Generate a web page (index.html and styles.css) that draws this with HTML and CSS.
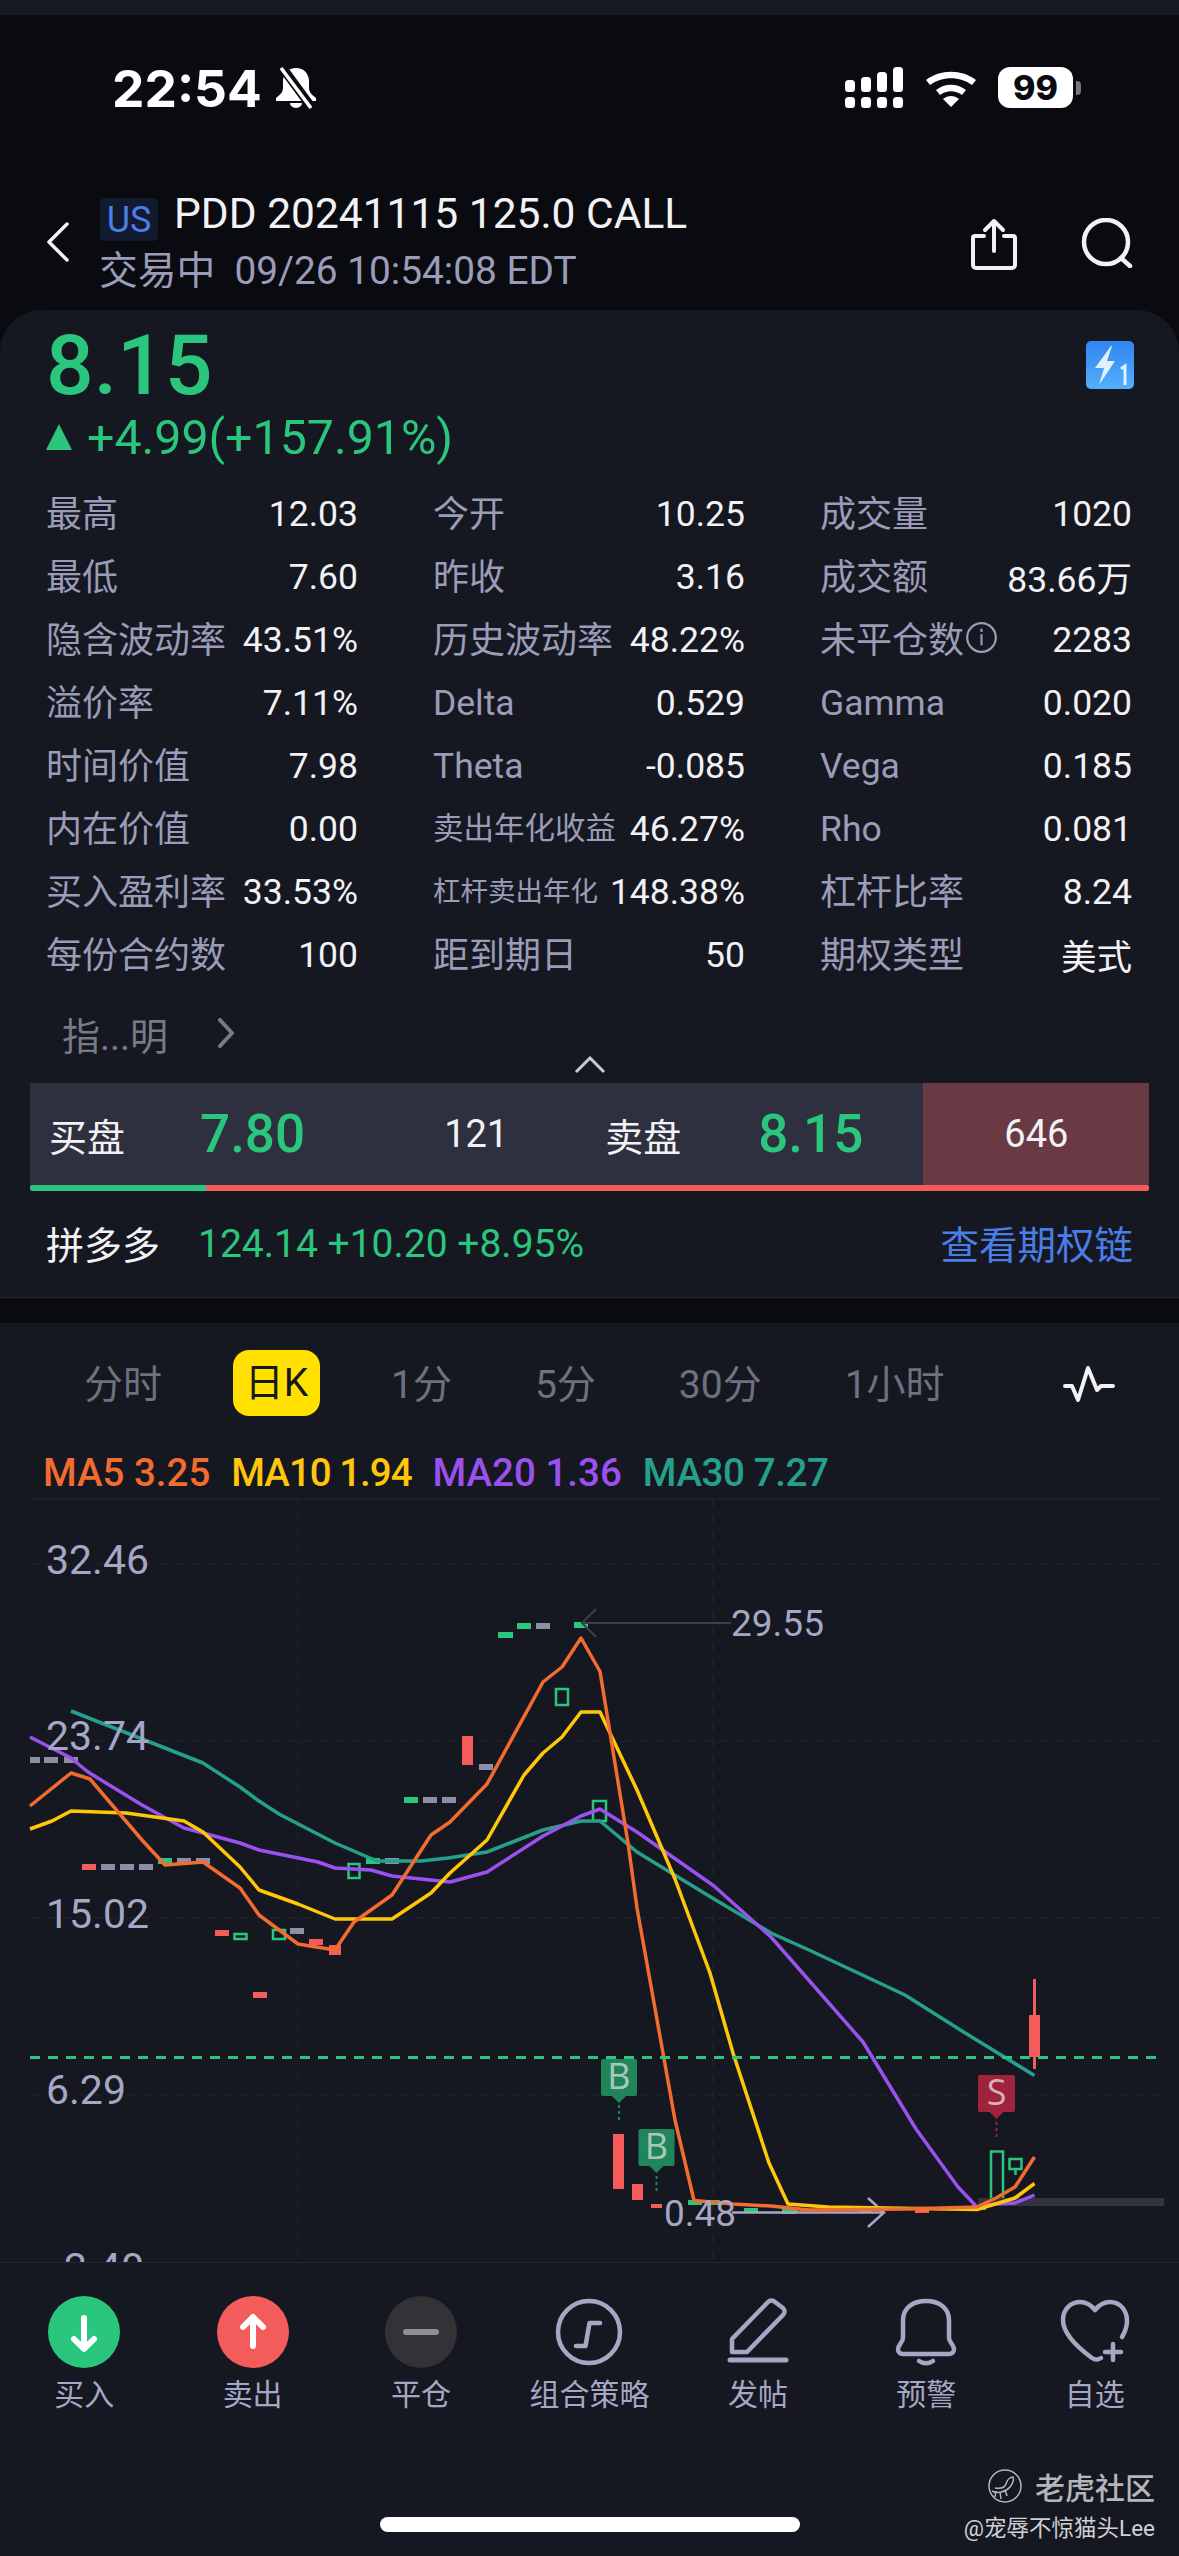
FILE: index.html
```html
<!DOCTYPE html>
<html lang="zh">
<head>
<meta charset="UTF-8">
<title>PDD 20241115 125.0 CALL</title>
<link rel="stylesheet" href="styles.css">
</head>
<body>
<div class="app">
  <div class="top-strip"></div>

  <div class="status-bar">
    <div class="status-left">
      <span class="clock">22:54</span>
      <svg class="bell-off" viewBox="0 0 42 42">
        <path d="M21 1C13 1 9 6 8 13v8c0 4-3 7-7 10v3h40v-3c-4-3-7-6-7-10v-8C33 6 29 1 21 1z" fill="#fff"/>
        <path d="M15 36a6 5 0 0 0 12 0z" fill="#fff"/>
        <path d="M7 0l30 41" stroke="#0a0b10" stroke-width="9"/>
        <path d="M6 1l30 40" stroke="#fff" stroke-width="3.5"/>
      </svg>
    </div>
    <div class="status-right">
      <svg class="signal" viewBox="0 0 58 41" fill="#fff">
        <rect x="0" y="13" width="10" height="12" rx="3.5"/><rect x="0" y="30" width="10" height="11" rx="3.5"/>
        <rect x="16" y="10" width="10" height="15" rx="3.5"/><rect x="16" y="30" width="10" height="11" rx="3.5"/>
        <rect x="32" y="5" width="10" height="20" rx="3.5"/><rect x="32" y="30" width="10" height="11" rx="3.5"/>
        <rect x="48" y="0" width="10" height="25" rx="3.5"/><rect x="48" y="30" width="10" height="11" rx="3.5"/>
      </svg>
      <svg class="wifi" viewBox="0 0 50 40" fill="#fff">
        <path d="M0 12C14 1 36 1 50 12l-4 5C34 8 16 8 4 17z"/>
        <path d="M10 22c9-7 21-7 30 0l-4 5c-7-5-15-5-22 0z"/>
        <path d="M25 39l-8-8c5-4 11-4 16 0z"/>
      </svg>
      <div class="battery">99</div>
      <div class="battery-nub"></div>
    </div>
  </div>

  <div class="nav-bar">
    <svg class="back" viewBox="0 0 24 40" fill="none" stroke="#f2f2f5" stroke-width="3.5" stroke-linecap="round" stroke-linejoin="round">
      <path d="M21 2L3 20l18 18"/>
    </svg>
    <div class="nav-title">
      <div class="title-line"><span class="market">US</span><span class="symbol">PDD 20241115 125.0 CALL</span></div>
      <div class="sub-line"><span>交易中</span><span>09/26 10:54:08 EDT</span></div>
    </div>
    <svg class="share" viewBox="0 0 48 52" fill="none" stroke="#f2f2f5" stroke-width="4" stroke-linecap="round" stroke-linejoin="round">
      <path d="M14 18H5a2 2 0 0 0-2 2v27a3 3 0 0 0 3 3h36a3 3 0 0 0 3-3V20a2 2 0 0 0-2-2h-9"/>
      <path d="M24 33V3M15 12l9-9 9 9"/>
    </svg>
    <svg class="search" viewBox="0 0 52 50" fill="none" stroke="#f2f2f5" stroke-width="4.5" stroke-linecap="round">
      <circle cx="25" cy="24" r="22"/>
      <path d="M40 40l9 8"/>
    </svg>
  </div>

  <div class="quote-panel">
    <div class="price-row">
      <span class="price">8.15</span>
      <svg class="flash" viewBox="0 0 48 48">
        <defs><linearGradient id="flashFill" x1="0" y1="0" x2="0" y2="1"><stop offset="0" stop-color="#2f86f0"/><stop offset="1" stop-color="#55aefc"/></linearGradient></defs>
        <rect width="48" height="48" rx="5" fill="url(#flashFill)"/>
        <path d="M25 5L9 27h9l-5 17 16-24h-8l5-15z" fill="#dff0ff"/>
        <path d="M35 28l4-3v19" fill="none" stroke="#dff0ff" stroke-width="3"/>
      </svg>
    </div>
    <div class="change-row"><i class="up-arrow"></i><span>+4.99(+157.91%)</span></div>

    <div class="stats">
      <div class="stat"><span class="k">最高</span><span class="v">12.03</span></div>
      <div class="stat"><span class="k">今开</span><span class="v">10.25</span></div>
      <div class="stat"><span class="k">成交量</span><span class="v">1020</span></div>
      <div class="stat"><span class="k">最低</span><span class="v">7.60</span></div>
      <div class="stat"><span class="k">昨收</span><span class="v">3.16</span></div>
      <div class="stat"><span class="k">成交额</span><span class="v">83.66万</span></div>
      <div class="stat"><span class="k">隐含波动率</span><span class="v">43.51%</span></div>
      <div class="stat"><span class="k">历史波动率</span><span class="v">48.22%</span></div>
      <div class="stat"><span class="k">未平仓数<svg class="info" viewBox="0 0 30 30" fill="none" stroke="#9a9cb8" stroke-width="2"><circle cx="15" cy="15" r="13"/><path d="M15 12v10M15 7v3"/></svg></span><span class="v">2283</span></div>
      <div class="stat"><span class="k">溢价率</span><span class="v">7.11%</span></div>
      <div class="stat"><span class="k en">Delta</span><span class="v">0.529</span></div>
      <div class="stat"><span class="k en">Gamma</span><span class="v">0.020</span></div>
      <div class="stat"><span class="k">时间价值</span><span class="v">7.98</span></div>
      <div class="stat"><span class="k en">Theta</span><span class="v">-0.085</span></div>
      <div class="stat"><span class="k en">Vega</span><span class="v">0.185</span></div>
      <div class="stat"><span class="k">内在价值</span><span class="v">0.00</span></div>
      <div class="stat"><span class="k small">卖出年化收益</span><span class="v">46.27%</span></div>
      <div class="stat"><span class="k en">Rho</span><span class="v">0.081</span></div>
      <div class="stat"><span class="k">买入盈利率</span><span class="v">33.53%</span></div>
      <div class="stat"><span class="k smaller">杠杆卖出年化</span><span class="v">148.38%</span></div>
      <div class="stat"><span class="k">杠杆比率</span><span class="v">8.24</span></div>
      <div class="stat"><span class="k">每份合约数</span><span class="v">100</span></div>
      <div class="stat"><span class="k">距到期日</span><span class="v">50</span></div>
      <div class="stat"><span class="k">期权类型</span><span class="v">美式</span></div>
    </div>

    <div class="guide-row">
      <span>指...明</span>
      <svg viewBox="0 0 18 30" fill="none" stroke="#777a88" stroke-width="4" stroke-linecap="round" stroke-linejoin="round"><path d="M3 2l12 13L3 28"/></svg>
    </div>
    <div class="collapse-row">
      <svg viewBox="0 0 32 18" fill="none" stroke="#c8c9d2" stroke-width="3"><path d="M2 16L16 2l14 14"/></svg>
    </div>

    <div class="book">
      <div class="book-cells">
        <span class="book-label bid-label">买盘</span>
        <span class="book-price bid-price">7.80</span>
        <span class="book-size bid-size">121</span>
        <span class="book-label ask-label">卖盘</span>
        <span class="book-price ask-price">8.15</span>
        <span class="book-depth">646</span>
      </div>
      <div class="book-ratio"><i class="ratio-bid"></i><i class="ratio-ask"></i></div>
    </div>

    <div class="underlying">
      <span class="u-name">拼多多</span>
      <span class="u-quote">124.14 +10.20 +8.95%</span>
      <span class="u-link">查看期权链</span>
    </div>
  </div>

  <div class="chart-panel">
    <div class="tabs">
      <span class="tab">分时</span>
      <span class="tab tab-active">日K</span>
      <span class="tab">1分</span>
      <span class="tab">5分</span>
      <span class="tab">30分</span>
      <span class="tab">1小时</span>
      <svg class="tab-icon" viewBox="0 0 52 36" fill="none" stroke="#f2f2f5" stroke-width="4" stroke-linejoin="round" stroke-linecap="round">
        <path d="M2 20h7l6 14 10-32 9 22 4-4h12"/>
      </svg>
    </div>

    <div class="legend">
      <span class="ma5">MA5 3.25</span>
      <span class="ma10">MA10 1.94</span>
      <span class="ma20">MA20 1.36</span>
      <span class="ma30">MA30 7.27</span>
    </div>

    <svg class="chart" viewBox="0 1493 1179 769" width="1179" height="769">
      <!-- grid -->
      <g stroke="#20222b" stroke-width="1.5" fill="none">
        <path d="M30 1499H1160"/>
        <path stroke-dasharray="8 8" d="M30 1564H1160M30 1741H1160M30 1918H1160M30 2095H1160"/>
        <path stroke-dasharray="8 8" d="M298 1499V2262M713 1499V2262"/>
      </g>

      <!-- candles -->
      <g fill="#8d8fa6">
        <rect x="30" y="1757" width="10" height="6"/><rect x="44" y="1757" width="14" height="6"/><rect x="64" y="1757" width="14" height="6"/>
        <rect x="101" y="1864" width="14" height="6"/><rect x="120" y="1864" width="14" height="6"/><rect x="139" y="1864" width="14" height="6"/>
        <rect x="177" y="1858" width="14" height="6"/><rect x="196" y="1858" width="14" height="6"/>
        <rect x="290" y="1928" width="14" height="6"/>
        <rect x="385" y="1858" width="14" height="6"/>
        <rect x="423" y="1797" width="14" height="6"/><rect x="442" y="1797" width="14" height="6"/>
        <rect x="479" y="1764" width="14" height="6"/>
        <rect x="536" y="1623" width="14" height="6"/>
      </g>
      <g fill="#f45b5b">
        <rect x="82" y="1864" width="14" height="6"/>
        <rect x="215" y="1930" width="14" height="6"/>
        <rect x="253" y="1992" width="14" height="6"/>
        <rect x="309" y="1939" width="14" height="6"/>
        <rect x="329" y="1945" width="12" height="10"/>
        <rect x="462" y="1736" width="11" height="29"/>
        <rect x="613" y="2134" width="11" height="55"/>
        <rect x="632" y="2184" width="11" height="16"/>
        <rect x="651" y="2204" width="11" height="4"/>
        <rect x="1029" y="2015" width="11" height="42"/>
        <rect x="1033" y="1979" width="3" height="90"/>
        <rect x="784" y="2210" width="14" height="3"/>
        <rect x="915" y="2210" width="14" height="3"/>
      </g>
      <g fill="#2bc67e">
        <rect x="158" y="1858" width="14" height="6"/>
        <rect x="366" y="1858" width="14" height="6"/>
        <rect x="404" y="1797" width="14" height="6"/>
        <rect x="498" y="1632" width="15" height="6"/>
        <rect x="517" y="1623" width="14" height="6"/>
        <rect x="574" y="1622" width="14" height="6"/>
        <rect x="688" y="2200" width="14" height="5"/>
        <rect x="706" y="2200" width="14" height="5"/>
        <rect x="744" y="2208" width="14" height="5"/>
        <rect x="782" y="2209" width="14" height="5"/>
        <rect x="858" y="2209" width="14" height="4"/>
        <rect x="972" y="2205" width="14" height="5"/>
      </g>
      <g fill="none" stroke="#2bc67e" stroke-width="2.5">
        <rect x="234.5" y="1934" width="12" height="5"/>
        <rect x="273" y="1930" width="12" height="9"/>
        <rect x="348.5" y="1864" width="11" height="14"/>
        <rect x="556" y="1689" width="12" height="16"/>
        <rect x="593" y="1801" width="13" height="20"/>
        <rect x="991" y="2151.5" width="12" height="48"/>
        <rect x="1009.5" y="2159" width="12" height="10"/>
        <path d="M1015.5 2169v6"/>
      </g>

      <rect x="978" y="2198" width="186" height="8" fill="#33343f"/>

      <!-- high / low markers -->
      <path d="M582 1623H731M596 1609l-14 14 14 14" fill="none" stroke="#3d3e49" stroke-width="2"/>
      <path d="M732 2212.5H884M868 2198l16 14.500-16 14.500" fill="none" stroke="#a5a7c4" stroke-width="2.500"/>

      <!-- moving averages -->
      <g fill="none" stroke-width="3.500" stroke-linejoin="round">
        <polyline stroke="#25a08c" points="71,1711 203,1763 240,1787 259,1801 279,1814 335,1843 377,1861 421,1861 448,1858 487,1852 543,1830 581,1821 600,1821 637,1852 714,1899 771,1933 809,1950 905,1995 962,2031 1034.500,2075.500"/>
        <polyline stroke="#9b51f0" points="30,1737 71,1758 88,1772 142,1805 184,1828 203,1833 240,1843 259,1850 318,1862 335,1868 371,1870 392,1876 450,1882 487,1872 543,1836 581,1816 600,1809 637,1832 714,1886 771,1937 863,2042 916,2129 958,2187 977,2207 996,2204 1015,2203 1034.500,2195"/>
        <polyline stroke="#ffc60a" points="30,1829 52,1821 71,1811 126,1813 184,1821 203,1832 240,1867 259,1890 298,1904 335,1919 392,1919 431,1893 450,1873 487,1840 524,1775 543,1753 562,1737 581,1712 600,1712 637,1790 675,1879 710,1973 733,2053 769,2163 788,2204 828,2207 977,2209.500 1015,2198 1034.500,2183.500"/>
        <polyline stroke="#f26b2f" points="30,1806 71,1773 90,1779 142,1840 165,1865 203,1862 240,1888 259,1915 298,1944 335,1950 354,1922 392,1895 431,1835 450,1822 487,1784 543,1682 562,1667 581,1638 600,1671.500 612,1745 628,1843 637,1908 675,2120 694,2200.500 733,2204 771,2206 809,2210 905,2209 977,2207 996,2198 1015,2187 1034.500,2157"/>
      </g>

      <!-- dashed last price -->
      <path d="M30 2057.500H1156" stroke="#2bc67e" stroke-width="3" stroke-dasharray="10 8"/>

      <!-- axis labels -->
      <g class="axis">
        <text x="46" y="1574">32.46</text>
        <text x="46" y="1750">23.74</text>
        <text x="46" y="1928">15.02</text>
        <text x="46" y="2104">6.29</text>
        <text x="64" y="2282">2.40</text>
      </g>
      <text class="mark-label" x="731" y="1636">29.55</text>
      <text class="mark-label" x="664" y="2226">0.48</text>

      <!-- trade markers -->
      <g>
        <path d="M603 2059h32a2 2 0 0 1 2 2v33a2 2 0 0 1-2 2h-9l-7 7-7-7h-9a2 2 0 0 1-2-2v-33a2 2 0 0 1 2-2z" fill="#20855a"/>
        <text class="trade-mark buy-mark" x="619" y="2089">B</text>
        <path d="M619 2105v16" stroke="#20855a" stroke-width="2" stroke-dasharray="3 3"/>
        <path d="M640.500 2129h32a2 2 0 0 1 2 2v33a2 2 0 0 1-2 2h-9l-7 7-7-7h-9a2 2 0 0 1-2-2v-33a2 2 0 0 1 2-2z" fill="#20855a"/>
        <text class="trade-mark buy-mark" x="656.500" y="2159">B</text>
        <path d="M656.500 2176v16" stroke="#20855a" stroke-width="2" stroke-dasharray="3 3"/>
        <path d="M980 2075h33a2 2 0 0 1 2 2v33a2 2 0 0 1-2 2h-9.500l-7 7-7-7H980a2 2 0 0 1-2-2v-33a2 2 0 0 1 2-2z" fill="#a0233c"/>
        <text class="trade-mark sell-mark" x="996.500" y="2105">S</text>
        <path d="M996.500 2122v16" stroke="#a0233c" stroke-width="2" stroke-dasharray="3 3"/>
      </g>
    </svg>

    <div class="actions">
      <div class="action">
        <svg viewBox="0 0 72 72"><circle cx="36" cy="36" r="36" fill="#2bc67e"/><path d="M36 22v30M26 43l10 10 10-10" fill="none" stroke="#fff" stroke-width="6" stroke-linecap="round" stroke-linejoin="round"/></svg>
        <span>买入</span>
      </div>
      <div class="action">
        <svg viewBox="0 0 72 72"><circle cx="36" cy="36" r="36" fill="#f45b5b"/><path d="M36 50V21M26 31l10-10 10 10" fill="none" stroke="#fff" stroke-width="6" stroke-linecap="round" stroke-linejoin="round"/></svg>
        <span>卖出</span>
      </div>
      <div class="action">
        <svg viewBox="0 0 72 72"><circle cx="36" cy="36" r="36" fill="#323237"/><path d="M21 36h30" stroke="#8f9097" stroke-width="6" stroke-linecap="round"/></svg>
        <span>平仓</span>
      </div>
      <div class="action">
        <svg viewBox="0 0 72 72" fill="none" stroke="#a5a7c4" stroke-width="4.500" stroke-linecap="round" stroke-linejoin="round"><circle cx="36" cy="36" r="31"/><path d="M23 50h9.500l4-23H47"/></svg>
        <span>组合策略</span>
      </div>
      <div class="action">
        <svg viewBox="0 0 72 72" fill="none" stroke="#a5a7c4" stroke-width="4.500" stroke-linecap="round" stroke-linejoin="round"><path d="M10 56V43L46 6c2-2 5-2 7 0l8 6c2 2 2 5 0 7L25 56z"/><path d="M8 64h56" stroke-width="5"/></svg>
        <span>发帖</span>
      </div>
      <div class="action">
        <svg viewBox="0 0 72 72" fill="none" stroke="#a5a7c4" stroke-width="4.500" stroke-linecap="round" stroke-linejoin="round"><path d="M13 42V24C13 12 23 5 36 5s23 7 23 19v18c0 4 5 7 5 11 0 3-2 5-5 5H13c-3 0-5-2-5-5 0-4 5-7 5-11z"/><path d="M29 65c4 3 10 3 14 0"/></svg>
        <span>预警</span>
      </div>
      <div class="action">
        <svg viewBox="0 0 72 72" fill="none" stroke="#a5a7c4" stroke-width="4.500" stroke-linecap="round" stroke-linejoin="round"><path d="M42 62c-3 2-6 2-9 0C18 51 4 38 4 24 4 13 12 6 21 6c6 0 11 3 15 8 4-5 9-8 15-8 10 0 17 8 17 19 0 6-2 11-5 16"/><path d="M46 56h16M54 48v16"/></svg>
        <span>自选</span>
      </div>
    </div>

    <div class="home-bar"></div>
  </div>

  <div class="watermark">
    <div class="wm-brand">
      <svg viewBox="0 0 34 34" fill="none" stroke="#b5b5bd" stroke-width="1.500"><circle cx="17" cy="17" r="16"/><path d="M4 22c5 3 14 1 18-4 3-4 4-8 3-10-3 0-6 3-7 7-1 3-5 5-11 4"/><path d="M8 22l-1 6M12 23l1 7M17 21l2 6"/></svg>
      <span>老虎社区</span>
    </div>
    <div class="wm-user">@宠辱不惊猫头Lee</div>
  </div>
</div>
</body>
</html>
```

FILE: styles.css
```css
* {
  box-sizing: border-box;
}
body {
  margin: 0;
  background: #0a0b10;
  font-family: Roboto, "Noto Sans CJK SC", sans-serif;
  color: #f2f2f5;
}
svg {
  display: block;
  flex: none;
}
.app {
  position: relative;
  width: 1179px;
  height: 2556px;
  overflow: hidden;
  background: #0a0b10;
  display: flex;
  flex-direction: column;
}
.top-strip {
  height: 15px;
  background: #171922;
}

/* status bar */
.status-bar {
  height: 145px;
  padding: 0 98px 0 112px;
  display: flex;
  justify-content: space-between;
  align-items: center;
}
.status-left, .status-right {
  display: flex;
  align-items: center;
}
.clock {
  font-family: Inter, Roboto, sans-serif;
  font-size: 51.500px;
  font-weight: 700;
  line-height: 50px;
  color: #fff;
}
.bell-off {
  width: 42px;
  height: 42px;
  margin-left: 13px;
}
.signal {
  width: 58px;
  height: 41px;
}
.wifi {
  width: 50px;
  height: 40px;
  margin-left: 23px;
}
.battery {
  width: 75px;
  height: 41px;
  margin-left: 22px;
  background: #fff;
  border-radius: 12px;
  color: #0a0b10;
  font-family: Inter, Roboto, sans-serif;
  font-size: 34px;
  font-weight: 800;
  line-height: 41px;
  text-align: center;
}
.battery-nub {
  width: 5px;
  height: 14px;
  margin-left: 3px;
  background: #77787e;
  border-radius: 0 4px 4px 0;
}

/* nav */
.nav-bar {
  height: 150px;
  padding: 16px 46px 0;
  display: flex;
  align-items: center;
  position: relative;
}
.back {
  width: 24px;
  height: 40px;
  margin-top: -2px;
}
.nav-title {
  margin-left: 30px;
  flex: 1;
}
.title-line {
  display: flex;
  align-items: center;
  height: 44px;
  margin-top: 3px;
}
.market {
  width: 58px;
  height: 43px;
  background: #121a30;
  border-radius: 5px;
  margin-top: 4px;
  color: #4a7de8;
  font-size: 36px;
  line-height: 45px;
  text-align: center;
}
.symbol {
  margin-left: 16px;
  font-size: 42.500px;
  margin-top: -8px;
}
.sub-line {
  display: flex;
  gap: 19px;
  margin-top: 8px;
  margin-left: -1px;
  font-size: 38.800px;
  line-height: 46px;
  color: #9a9cb8;
}
.share {
  width: 48px;
  height: 52px;
  margin-right: 63px;
  margin-top: 2px;
}
.search {
  width: 52px;
  height: 50px;
}

/* quote panel */
.quote-panel {
  height: 988px;
  background: #161821;
  border-radius: 42px 42px 0 0;
  border-bottom: 1px solid #23252f;
  padding-top: 14px;
}
.price-row {
  height: 84px;
  padding: 0 45px 0 46px;
  display: flex;
  justify-content: space-between;
  align-items: center;
}
.price {
  font-size: 84px;
  line-height: 84px;
  font-weight: 500;
  color: #2bc67e;
}
.flash {
  width: 48px;
  height: 48px;
  margin-top: -2px;
}
.change-row {
  height: 50px;
  margin-top: 4px;
  padding-left: 46px;
  display: flex;
  align-items: center;
  gap: 15px;
  font-size: 48.300px;
  color: #2bc67e;
}
.up-arrow {
  width: 0;
  height: 0;
  border-left: 13px solid transparent;
  border-right: 13px solid transparent;
  border-bottom: 26px solid #2bc67e;
}
.stats {
  margin-top: 20px;
  padding: 0 47px;
  display: grid;
  grid-template-columns: repeat(3, 311px);
  grid-auto-rows: 63px;
  column-gap: 76px;
}
.stat {
  display: flex;
  justify-content: space-between;
  align-items: center;
  font-size: 35.500px;
}
.k {
  display: flex;
  align-items: center;
  margin: -5px 0 0 -1px;
  font-size: 36px;
  color: #9a9cb8;
}
.k.en {
  margin-top: 0;
  font-size: 35.500px;
}
.k.small {
  font-size: 30.500px;
}
.k.smaller {
  font-size: 27.500px;
}
.v {
  color: #f2f2f5;
}
.info {
  width: 33px;
  height: 33px;
  margin-left: 1px;
}
.guide-row {
  height: 44px;
  margin-top: 25px;
  padding-left: 62px;
  display: flex;
  align-items: center;
  gap: 48px;
  font-size: 38px;
  color: #777a88;
}
.guide-row svg {
  width: 20px;
  height: 30px;
}
.collapse-row {
  height: 28px;
  padding-top: 1px;
  display: flex;
  justify-content: center;
}
.collapse-row svg {
  width: 32px;
  height: 18px;
}
.book {
  margin: 0 30px;
}
.book-cells {
  height: 102px;
  background: linear-gradient(to right, #2f303f 893px, #6a3a44 893px);
  display: flex;
  align-items: center;
  color: #f2f2f5;
}
.book-label {
  font-size: 38px;
}
.book-price {
  font-size: 53px;
  font-weight: 500;
  color: #2bc67e;
}
.book-size, .book-depth {
  font-size: 38px;
}
.bid-label {
  margin-left: 19px;
}
.bid-price {
  margin-left: 75px;
}
.bid-size {
  margin-left: 139px;
}
.ask-label {
  margin-left: 97px;
}
.ask-price {
  margin-left: 77px;
}
.book-depth {
  margin-left: 141px;
}
.book-ratio {
  height: 6px;
  display: flex;
  border-radius: 2px;
  overflow: hidden;
}
.ratio-bid {
  width: 176px;
  background: #2bc67e;
}
.ratio-ask {
  flex: 1;
  background: #f45b5b;
}
.underlying {
  height: 106px;
  padding: 0 46px 0 46px;
  display: flex;
  align-items: center;
}
.u-name {
  margin-top: -4px;
  font-size: 38px;
}
.u-quote {
  margin-left: 38px;
  font-size: 39px;
  color: #2bc67e;
  flex: 1;
}
.u-link {
  margin-top: -4px;
  font-size: 38.500px;
  color: #4a7de8;
}

/* chart */
.chart-panel {
  margin-top: 25px;
  flex: 1;
  background: #161821;
  display: flex;
  flex-direction: column;
}
.tabs {
  height: 66px;
  margin-top: 27px;
  padding: 0 64px 0 84px;
  display: flex;
  align-items: center;
  gap: 83px;
  font-size: 39px;
  color: #6f7180;
}
.tab {
  margin-top: -5px;
}
.tab-active {
  margin: 0 -12px;
  width: 87px;
  height: 66px;
  background: #ffe000;
  border-radius: 16px;
  color: #161821;
  line-height: 66px;
  text-align: center;
}
.tab-icon {
  width: 52px;
  height: 36px;
  margin-left: auto;
  margin-top: 2px;
}
.legend {
  height: 40px;
  margin-top: 37px;
  padding-left: 43px;
  display: flex;
  align-items: center;
  gap: 21px;
  font-size: 38.500px;
  font-weight: 500;
  line-height: 40px;
}
.ma5 {
  color: #f26b2f;
}
.ma10 {
  color: #ffc60a;
  letter-spacing: -1px;
}
.ma20 {
  color: #9b51f0;
}
.ma30 {
  color: #25a08c;
  letter-spacing: -0.400px;
}
.axis text {
  font-size: 41px;
  fill: #a5a7c4;
}
.mark-label {
  font-size: 37px;
  fill: #a5a7c4;
}
.trade-mark {
  font-size: 36px;
  text-anchor: middle;
  font-family: "Open Sans", sans-serif;
}
.buy-mark {
  fill: #a8c9b8;
}
.sell-mark {
  fill: #d8b0b8;
}

/* bottom actions */
.actions {
  border-top: 1.500px solid #23252f;
  padding-top: 33px;
  display: flex;
}
.action {
  flex: 1;
  display: flex;
  flex-direction: column;
  align-items: center;
  gap: 7px;
  font-size: 30px;
  line-height: 40px;
  color: #a5a7c4;
}
.action svg {
  width: 72px;
  height: 72px;
}
.home-bar {
  width: 420px;
  height: 15px;
  margin: 102px auto 0;
  background: #fff;
  border-radius: 8px;
}
.watermark {
  position: absolute;
  right: 24px;
  top: 2469px;
  display: flex;
  flex-direction: column;
  align-items: flex-end;
}
.wm-brand {
  display: flex;
  align-items: center;
  gap: 13px;
  height: 34px;
  font-size: 30px;
  font-weight: 500;
  color: #b5b5bd;
}
.wm-brand svg {
  width: 34px;
  height: 34px;
}
.wm-user {
  margin-top: 11px;
  font-size: 22.500px;
  line-height: 28px;
  color: #d0d0d5;
}
```
